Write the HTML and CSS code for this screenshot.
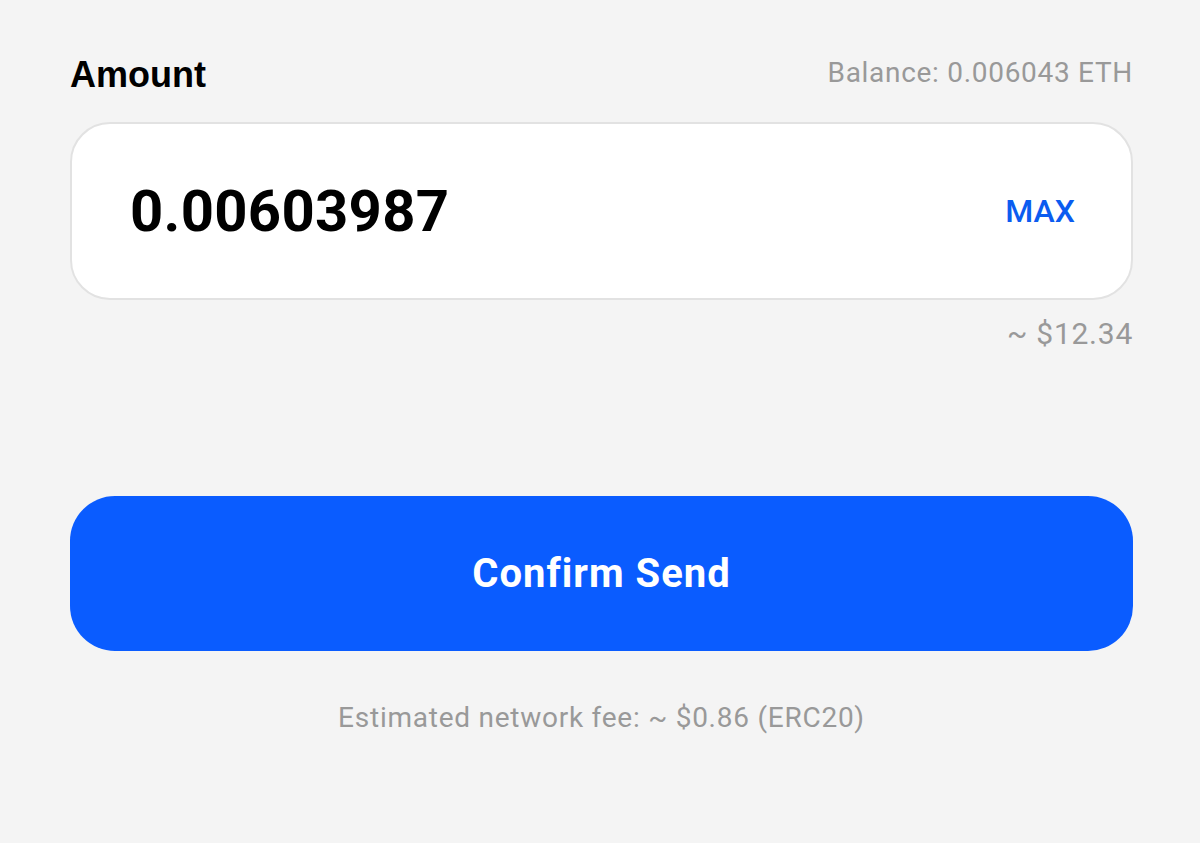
FILE: index.html
```html
<!DOCTYPE html>
<html lang="en">
<head>
  <meta charset="UTF-8">
  <meta name="viewport" content="width=device-width, initial-scale=1.0">
  <title>Send ETH</title>
  <link rel="stylesheet" href="styles.css">
</head>
<body>
  <div class="send">
    <div class="label-row">
      <div class="label">Amount</div>
      <div class="balance">Balance: 0.006043 ETH</div>
    </div>
    <div class="amount-box">
      <div class="amount">0.00603987</div>
      <button class="max">MAX</button>
    </div>
    <div class="fiat">~ $12.34</div>
    <button class="confirm">Confirm Send</button>
    <div class="fee">Estimated network fee: ~ $0.86 (ERC20)</div>
  </div>
</body>
</html>
```

FILE: styles.css
```css
body {
  font-family: Roboto, sans-serif;
  background: #f4f4f4;
  margin: 0;
}
.send {
  padding: 50px 67px 0 70px;
}
.label-row {
  display: flex;
  justify-content: space-between;
  align-items: center;
  height: 46px;
}
.label {
  font-family: "Liberation Sans", Arial, sans-serif;
  font-weight: bold;
  font-size: 36px;
  color: #000;
  margin-top: 4px;
}
.balance {
  font-size: 28px;
  letter-spacing: 0.7px;
  color: #999;
  margin-top: -2px;
}
.amount-box {
  display: flex;
  align-items: center;
  justify-content: space-between;
  margin-top: 26px;
  height: 174px;
  background: white;
  border: 2px solid #e2e2e2;
  border-radius: 40px;
  padding: 0 56px 0 58px;
}
.amount {
  font-family: Roboto, sans-serif;
  font-weight: bold;
  font-size: 58px;
  letter-spacing: 0.3px;
  color: #000;
}
.max {
  background: none;
  border: none;
  font-family: Roboto, sans-serif;
  font-weight: 500;
  font-size: 32px;
  color: #0b5cf0;
  padding: 0;
}
.fiat {
  text-align: right;
  font-size: 30px;
  letter-spacing: 0.75px;
  color: #999;
  margin-top: 16px;
}
.confirm {
  display: block;
  width: 100%;
  height: 155px;
  margin-top: 145px;
  background: #0a5cff;
  border: none;
  border-radius: 45px;
  color: white;
  font-family: Roboto, sans-serif;
  font-weight: bold;
  font-size: 40px;
  letter-spacing: 1px;
}
.fee {
  text-align: center;
  font-size: 28px;
  letter-spacing: 0.75px;
  color: #999;
  margin-top: 50px;
}
```
